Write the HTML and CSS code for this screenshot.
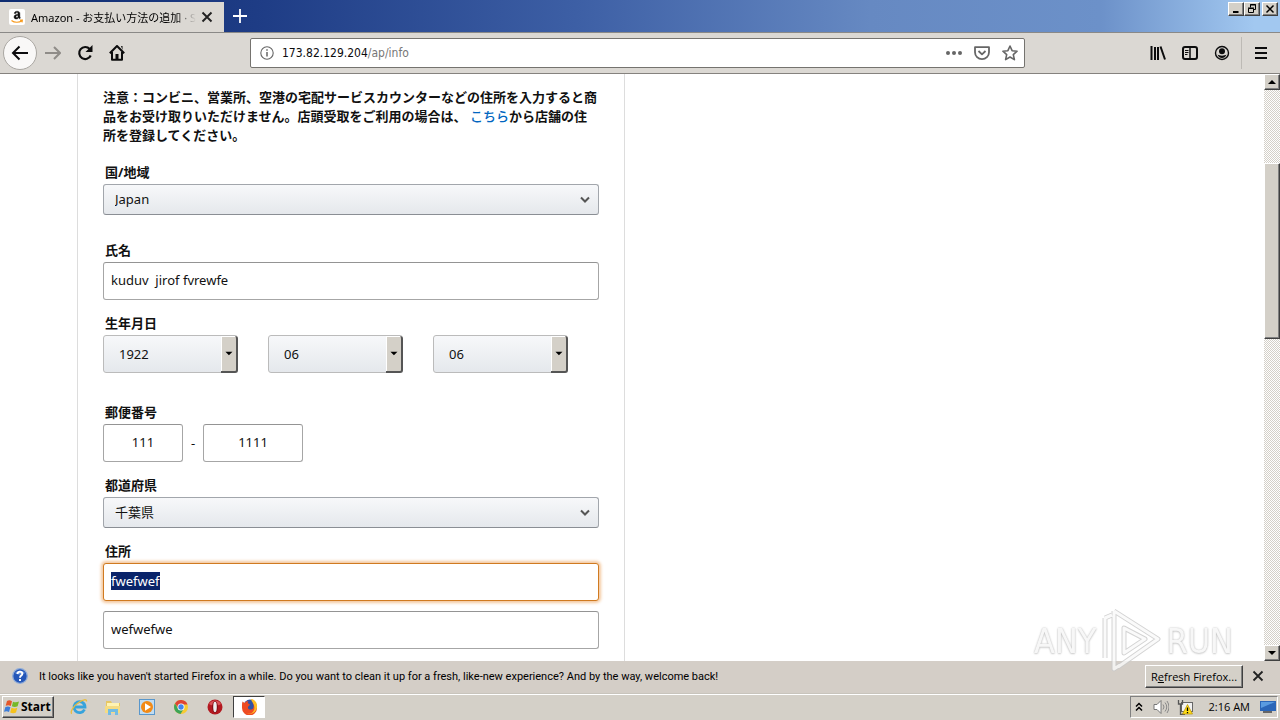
FILE: index.html
```html
<!DOCTYPE html>
<html lang="ja">
<head>
<meta charset="utf-8">
<title>Amazon - お支払い方法の追加</title>
<link rel="stylesheet" href="styles.css">
</head>
<body>
<header class="tabbar">
  <div class="tab">
    <svg class="favicon" viewBox="0 0 16 16" aria-hidden="true"><rect width="16" height="16" rx="2" fill="#fff"/><path d="M10 8.500c-.8 1-1.700 1.500-2.700 1.500C5.900 10 5 9.200 5 7.900 5 6 6.600 5.400 9 5.300V4.700C9 3.900 8.600 3.600 7.900 3.600S6.900 4 6.800 4.600L5.200 4.400C5.400 3 6.500 2.200 8.100 2.200c1.900 0 2.800.9 2.800 2.500V7.500c0 .7.2 1 .6 1.500l-1.100 1zM9 6.400c-1.400 0-2 .5-2 1.300 0 .6.3.9.8.9C8.600 8.600 9 7.900 9 7z" fill="#111" stroke="#111" stroke-width=".4"/><path d="M2.500 11.500c3 2.300 7.500 2.300 10.500.3M11 11.200l2.300-.1-.3 2.200" fill="none" stroke="#f79a1c" stroke-width="1.200"/></svg>
    <span class="tab-title">Amazon - お支払い方法の追加 · S</span>
    <button class="icon-btn tab-close" aria-label="Close tab"><svg width="12" height="12" viewBox="0 0 12 12"><path d="M1.500 1.500l9 9m0-9l-9 9" stroke="#222" stroke-width="1.900"/></svg></button>
  </div>
  <button class="icon-btn new-tab" aria-label="New tab"><svg width="16" height="16" viewBox="0 0 16 16"><path d="M8 1v14M1 8h14" stroke="#fff" stroke-width="1.800"/></svg></button>
  <div class="caption">
    <button class="raised cap" aria-label="Minimize"><svg width="12" height="10" viewBox="0 0 12 10"><path d="M3 8h5.500" stroke="#000" stroke-width="2"/></svg></button>
    <button class="raised cap" aria-label="Restore"><svg width="12" height="10" viewBox="0 0 12 10"><path d="M4.500 3.500V.5h5v5h-2M4 1h6M2.500 4.500h5v4h-5zM2 4h6" fill="none" stroke="#000"/></svg></button>
    <button class="raised cap cap-close" aria-label="Close"><svg width="12" height="10" viewBox="0 0 12 10"><path d="M2.500 1.500l7 7m0-7l-7 7" stroke="#000" stroke-width="1.500"/></svg></button>
  </div>
</header>
<nav class="toolbar">
  <button class="icon-btn back" aria-label="Back"><svg width="18" height="16" viewBox="0 0 18 16"><path d="M8.500 1.500L2 8l6.500 6.500M2 8h15" fill="none" stroke="#0c0c0d" stroke-width="2"/></svg></button>
  <button class="icon-btn nav-btn" aria-label="Forward"><svg width="16" height="16" viewBox="0 0 16 16"><path d="M9 2l6 6-6 6M15 8H0" fill="none" stroke="#8f8c88" stroke-width="2"/></svg></button>
  <button class="icon-btn nav-btn" aria-label="Reload"><svg width="16" height="16" viewBox="0 0 16 16"><path d="M12.700 4A6 6 0 1 0 13.700 10.500" fill="none" stroke="#0c0c0d" stroke-width="2.200"/><path d="M15.500 0v7h-7z" fill="#0c0c0d"/></svg></button>
  <button class="icon-btn nav-btn" aria-label="Home"><svg width="16" height="16" viewBox="0 0 16 16"><path d="M.8 8.200L8 1l7.200 7.200M3 7v7.800h10V7" fill="none" stroke="#0c0c0d" stroke-width="2" stroke-linejoin="round"/><path d="M12 1h1.500v4M6.500 9h3v6h-3z" fill="#0c0c0d"/></svg></button>
  <div class="urlbar">
    <svg width="14" height="14" viewBox="0 0 14 14" aria-hidden="true"><circle cx="7" cy="7" r="6.200" fill="none" stroke="#666" stroke-width="1.100"/><path d="M7 6v4.500M7 3.200v1.600" stroke="#666" stroke-width="1.500"/></svg>
    <span class="url">173.82.129.204<span class="path">/ap/info</span></span>
    <button class="icon-btn" aria-label="Page actions"><svg width="16" height="16" viewBox="0 0 16 16"><g fill="#666"><circle cx="2" cy="8" r="2"/><circle cx="8" cy="8" r="2"/><circle cx="14" cy="8" r="2"/></g></svg></button>
    <button class="icon-btn" aria-label="Save to Pocket"><svg width="16" height="16" viewBox="0 0 16 16"><path d="M1 2.200h14v5a7 7 0 0 1-14 0zM4.500 6l3.500 3.300L11.500 6" fill="none" stroke="#666" stroke-width="1.800" stroke-linejoin="round"/></svg></button>
    <button class="icon-btn" aria-label="Bookmark"><svg width="16" height="16" viewBox="0 0 16 16"><path d="M8 1l2.100 4.700 5 .5-3.800 3.400 1.100 5L8 12l-4.400 2.600 1.100-5L.9 6.200l5-.5z" fill="none" stroke="#666" stroke-width="1.600" stroke-linejoin="round"/></svg></button>
  </div>
  <div class="tools">
    <button class="icon-btn" aria-label="Library"><svg width="16" height="16" viewBox="0 0 16 16"><path d="M1.500 1v14M5 2v13M8 2v13M10.500 1.500l4.500 13" fill="none" stroke="#0c0c0d" stroke-width="2"/></svg></button>
    <button class="icon-btn" aria-label="Sidebars"><svg width="16" height="16" viewBox="0 0 16 16"><rect x="1" y="2" width="14" height="12" rx="2" fill="none" stroke="#0c0c0d" stroke-width="2"/><path d="M8 2v12" stroke="#0c0c0d" stroke-width="1.500"/><path d="M3 5.500h3.500M3 7.500h3.500M3 9.500h2.500" stroke="#0c0c0d"/></svg></button>
    <button class="icon-btn" aria-label="Account"><svg width="16" height="16" viewBox="0 0 16 16"><circle cx="8" cy="8" r="6.500" fill="none" stroke="#0c0c0d" stroke-width="1.400"/><circle cx="8" cy="6.200" r="3" fill="#0c0c0d"/><path d="M3.500 9.500c2 1.500 7 1.500 9 0-.8 2.500-2.500 3.500-4.500 3.500s-3.700-1-4.500-3.500z" fill="#0c0c0d"/></svg></button>
    <span class="tool-sep"></span>
    <button class="icon-btn" aria-label="Menu"><svg width="16" height="16" viewBox="0 0 16 16"><path d="M2 3h12M2 8h12M2 13h12" stroke="#0c0c0d" stroke-width="2"/></svg></button>
  </div>
</nav>
<div class="viewport">
  <main class="page">
    <form class="card">
      <p class="notice">注意：コンビニ、営業所、空港の宅配サービスカウンターなどの住所を入力すると商品をお受け取りいただけません。店頭受取をご利用の場合は、 <a href="#">こちら</a>から店舗の住所を登録してください。</p>
      <div class="field country">
        <label for="country">国/地域</label>
        <div class="select wide"><select id="country"><option>Japan</option></select><svg class="chevron" viewBox="0 0 10 8"><path d="M1 1.500l4 4 4-4" fill="none" stroke="#555" stroke-width="2"/></svg></div>
      </div>
      <div class="field">
        <label for="name">氏名</label>
        <input id="name" type="text" value="kuduv  jirof fvrewfe">
      </div>
      <div class="field birth">
        <label for="year">生年月日</label>
        <div class="dates">
          <div class="select date"><select id="year"><option>1922</option></select><svg class="arrow" viewBox="0 0 17 36"><path d="M5 16l4 4 4-4z"/></svg></div>
          <div class="select date"><select aria-label="月"><option>06</option></select><svg class="arrow" viewBox="0 0 17 36"><path d="M5 16l4 4 4-4z"/></svg></div>
          <div class="select date"><select aria-label="日"><option>06</option></select><svg class="arrow" viewBox="0 0 17 36"><path d="M5 16l4 4 4-4z"/></svg></div>
        </div>
      </div>
      <div class="field">
        <label for="zip">郵便番号</label>
        <div class="zip"><input id="zip" class="zip-a" type="text" value="111"><span>-</span><input class="zip-b" type="text" value="1111" aria-label="郵便番号 下4桁"></div>
      </div>
      <div class="field">
        <label for="pref">都道府県</label>
        <div class="select wide"><select id="pref"><option>千葉県</option></select><svg class="chevron" viewBox="0 0 10 8"><path d="M1 1.500l4 4 4-4" fill="none" stroke="#555" stroke-width="2"/></svg></div>
      </div>
      <div class="field address">
        <label for="addr">住所</label>
        <input id="addr" type="text" value="fwefwef">
        <input type="text" value="wefwefwe" aria-label="住所 2">
      </div>
    </form>
  </main>
  <div class="scrollbar">
    <button class="raised scroll-btn" aria-label="Scroll up"><svg width="8" height="4" viewBox="0 0 8 4"><path d="M0 4l4-4 4 4z"/></svg></button>
    <div class="track"><div class="before"></div><div class="raised thumb"></div><div class="after"></div></div>
    <button class="raised scroll-btn" aria-label="Scroll down"><svg width="8" height="4" viewBox="0 0 8 4"><path d="M0 0l4 4 4-4z"/></svg></button>
  </div>
</div>
<aside class="notification">
  <svg width="16" height="16" viewBox="0 0 16 16" aria-hidden="true"><circle cx="8" cy="8" r="7.300" fill="#2456b8" stroke="#8eabd8" stroke-width="1.300"/><path d="M3 5a6 5 0 0 1 10 0c-3 2-7 2-10 0z" fill="#6c95df"/><path d="M5.500 6C5.500 2.700 10.500 3 10.300 6 10.200 7.700 8 7.600 8 9.700M8 11v2" fill="none" stroke="#fff" stroke-width="1.900"/></svg>
  <p>It looks like you haven't started Firefox in a while. Do you want to clean it up for a fresh, like-new experience? And by the way, welcome back!</p>
  <button class="raised refresh">R<u>e</u>fresh Firefox...</button>
  <button class="icon-btn" aria-label="Dismiss"><svg width="12" height="12" viewBox="0 0 12 12"><path d="M1.500 1.500l9 9m0-9l-9 9" stroke="#222" stroke-width="1.800"/></svg></button>
</aside>
<footer class="taskbar">
  <button class="raised start"><svg width="16" height="16" viewBox="0 0 16 16" aria-hidden="true"><path d="M3 2c2-1 3-.8 5 .2L6.800 7C5 6 3.800 6 1.700 6.700z" fill="#e4572a"/><path d="M9 2.700c2 .8 3.400.9 6-.2l-1.400 4.800c-2 .9-3.800.8-5.700 0z" fill="#76b82a"/><path d="M1.400 8c2-.8 3.400-.7 5 .2L5 13c-1.800-1-3-1-5-.2z" fill="#3c7dd9"/><path d="M7.500 8.700c2 .9 3.800.9 5.800.1L12 13.500c-2 .9-3.800.8-5.800-.1z" fill="#f6c21c"/></svg>Start</button>
  <div class="launch">
    <button class="icon-btn task" aria-label="Internet Explorer"><svg width="18" height="18" viewBox="0 0 18 18"><path d="M14.500 11.500A5.500 5.500 0 1 1 15 9H5" fill="none" stroke="#36a3dc" stroke-width="2.800"/><path d="M2 15.500C-.5 15 3 8 9 4.200c4-2.700 8-3.500 7.500-.7" fill="none" stroke="#e8bc3c" stroke-width="1.300"/></svg></button>
    <button class="icon-btn task" aria-label="Explorer"><svg width="18" height="18" viewBox="0 0 18 18"><path d="M2 3h5l1 2h8v10H2z" fill="#e7c763"/><path d="M3 5h12v5H3z" fill="#fff3b2"/><path d="M1 8h15v7H1z" fill="#f5dc83"/><path d="M4 17v-6h10v6h-3v-3H7v3z" fill="#72bce3"/></svg></button>
    <button class="icon-btn task" aria-label="Media Player"><svg width="18" height="18" viewBox="0 0 18 18"><rect x="1.500" y="1.500" width="15" height="15" fill="#c1dcf1" stroke="#5997cc"/><circle cx="9" cy="9" r="6" fill="#f28a16"/><path d="M7 5.300v7.400L13 9z" fill="#fff"/></svg></button>
    <button class="icon-btn task" aria-label="Chrome"><svg width="16" height="16" viewBox="0 0 16 16"><circle cx="8" cy="8" r="7" fill="#f7cb33"/><path d="M2 4.500a7 7 0 0 1 12.500 1H8L5.500 9.500z" fill="#df4435"/><path d="M2 4.500A7 7 0 0 0 7.500 15L11 9.500H5z" fill="#3da458"/><circle cx="8" cy="8" r="3.500" fill="#fff"/><circle cx="8" cy="8" r="2.700" fill="#4385ee"/></svg></button>
    <button class="icon-btn task" aria-label="Opera"><svg width="16" height="16" viewBox="0 0 16 16"><circle cx="8" cy="8" r="7.500" fill="#b31920"/><path d="M2 5a7 7 0 0 1 12 0c-3 2-9 2-12 0z" fill="#db5358"/><ellipse cx="8" cy="8" rx="2.900" ry="6" fill="#7d0d15"/><ellipse cx="8" cy="8" rx="1.800" ry="5.200" fill="#eee"/></svg></button>
    <button class="icon-btn task active" aria-label="Firefox"><svg width="17" height="17" viewBox="0 0 17 17"><circle cx="9" cy="8" r="6.500" fill="#3153a6"/><path d="M1.500 3.500l2 1.500C5 3 6.500 3 7.500 3.500 6 4.500 7 6 9 6.500c0 1-2.500 1.500-2 3.500s4 2 5 .5 1-4-.5-6c3 .5 4.500 3 4.500 5.500a7.500 7.500 0 0 1-15 0C1 7.500.8 5.500 1.500 3.500z" fill="#ee4b22"/><path d="M10 1c4 .5 6.500 4 6 8.500-1 5-5.500 7.300-10 6.200 5 .3 8-2.700 7.300-7C13 5 10.500 4 10 1z" fill="#ffbd24"/></svg></button>
  </div>
  <div class="tray">
    <svg width="8" height="10" viewBox="0 0 8 10"><path d="M1 4.500l3-3 3 3M1 8.500l3-3 3 3" fill="none" stroke="#000" stroke-width="1.500"/></svg>
    <svg class="speaker" width="16" height="16" viewBox="0 0 16 16"><path d="M1 5.500h3L8 1.500v13l-4-4H1z" fill="#fff" stroke="#777"/><path d="M10 5.500q2 2.500 0 5M12 3.500q3.500 4.500 0 9M14 2q4 6 0 12" fill="none" stroke="#888"/></svg>
    <svg class="network" width="16" height="16" viewBox="0 0 16 16"><rect x="4.500" y="3.500" width="11" height="9" fill="#f2f2f2" stroke="#666"/><path d="M1.500 1v4h4V1M3.500 5v10.500H8" fill="none" stroke="#555" stroke-width="1.300"/><path d="M10.500 5.500l5 9.500h-10z" fill="#ffdc16" stroke="#b79000" stroke-width=".7"/><path d="M10.500 8.500v3.500M10.500 13v1.200" stroke="#000" stroke-width="1.300"/></svg>
    <time>2:16 AM</time>
    <svg width="16" height="14" viewBox="0 0 16 14"><path d="M0 1h16v10H0z" fill="#2b66b8"/><path d="M1 2h14L1 8z" fill="#5a9be0"/><path d="M3 12h9" stroke="#666" stroke-width="2"/></svg>
  </div>
</footer>
<div class="watermark" aria-hidden="true"><span>ANY</span><svg width="62" height="66" viewBox="0 0 62 66"><g fill="none" stroke-linejoin="round"><path d="M14 3L58 31 18 59M14 3v46M24 20v25l21-14zM5 10v40M14 49v12l6-4M5 10l7-3" stroke="#c9c9c9" stroke-width="5"/><path d="M14 3L58 31 18 59M14 3v46M24 20v25l21-14zM5 10v40M14 49v12l6-4M5 10l7-3" stroke="#fafafa" stroke-width="3"/></g></svg><span>RUN</span></div>
<script src="page.js"></script>
</body>
</html>
```
FILE: page.js
```js
const address = document.getElementById("addr");
address.focus({ preventScroll: true });
address.select();
```
FILE: styles.css
```css
* { box-sizing: border-box; }
body {
  margin: 0;
  height: 100vh;
  display: flex;
  flex-direction: column;
  overflow: hidden;
  background: #fff;
  color: #111;
  font: 13px/19px "Noto Sans", "Noto Sans CJK JP", sans-serif;
}
button { font: inherit; color: #000; margin: 0; }
p { margin: 0; }
svg { display: block; flex: none; }
.icon-btn { display: flex; align-items: center; justify-content: center; padding: 0; border: 0; background: none; }
.raised {
  background: #d4d0c8;
  border: 1px solid;
  border-color: #fff #404040 #404040 #fff;
  box-shadow: inset -1px -1px #808080;
}

.tabbar {
  display: flex;
  flex: none;
  height: 32px;
  padding-top: 2px;
  background: linear-gradient(90deg, #0e2c70 0%, #1e3c85 20%, #3d5fa5 45%, #6689c2 68%, #6c91c9 86%, #a2c8f0 98%);
}
.tab {
  display: flex;
  align-items: center;
  width: 224px;
  padding: 0 11px 0 9px;
  background: #dbd8d3;
}
.favicon { width: 16px; height: 16px; }
.tab-title {
  flex: 1;
  margin-left: 6px;
  white-space: nowrap;
  font-family: "Noto Sans", "Noto Sans CJK JP", sans-serif;
  font-size: 11px;
  color: #000;
  mask-image: linear-gradient(90deg, #000 88%, transparent);
}
.tab-close { margin-left: 5px; }
.new-tab { width: 32px; height: 28px; }
.caption { display: flex; align-items: flex-start; margin-left: auto; padding-right: 2px; }
.cap { display: flex; align-items: center; justify-content: center; width: 16px; height: 14px; padding: 0; }
.cap-close { margin-left: 2px; }

.toolbar {
  display: flex;
  align-items: center;
  flex: none;
  height: 42px;
  padding: 0 11px 0 3px;
  background: #dbd8d3;
  border-top: 1px solid #8a8987;
  border-bottom: 1px solid #85827e;
}
.back { width: 34px; height: 34px; border: 1px solid #aaa7a2; border-radius: 50%; background: #f9f8f7; }
.nav-btn { width: 32px; height: 32px; }
.urlbar {
  display: flex;
  align-items: center;
  gap: 12px;
  width: 775px;
  height: 30px;
  margin-left: 117px;
  padding: 0 6px 0 9px;
  background: #fff;
  border: 1px solid #75736f;
  border-radius: 2px;
}
.url {
  flex: 1;
  margin-left: -4px;
  color: #0c0c0d;
  font-family: "DejaVu Sans Condensed", "DejaVu Sans", sans-serif;
  font-size: 12px;
}
.path { color: #777; }
.tools { display: flex; align-items: center; gap: 16px; margin-left: auto; }
.tool-sep { width: 1px; height: 32px; margin: 0 -5px; background: #bdbab5; }

.viewport { display: flex; flex: 1; min-height: 0; }
.page { display: flex; flex: 1; overflow: hidden; padding-left: 77px; }
.card {
  width: 548px;
  padding: 14px 25px 0;
  border: solid #ddd;
  border-width: 0 1px;
}
.notice { margin-bottom: 18px; font-weight: 700; }
.notice a { color: #0066c0; font-weight: 500; text-decoration: none; }
.field { margin-bottom: 14px; }
.country { margin-bottom: 26px; }
.birth { margin-bottom: 30px; }
label { display: block; margin: 0 2px 2px; font-weight: 700; }
input, select { font: inherit; color: #111; }
input {
  display: block;
  width: 100%;
  height: 38px;
  padding: 0 7px 2px;
  border: 1px solid #a6a6a6;
  border-top-color: #949494;
  border-radius: 3px;
  outline: 0;
}
input:focus { border-color: #d07a20; box-shadow: 0 0 3px 2px rgba(228, 121, 17, .4); }
input::selection { background: #0a246a; color: #fff; }
.address input + input { margin-top: 10px; }
.select { position: relative; }
select {
  display: block;
  width: 100%;
  height: 31px;
  padding: 0 11px;
  appearance: none;
  border: 1px solid #a2a6ac;
  border-bottom-color: #8a8e94;
  border-radius: 3px;
  background: linear-gradient(#f7f8fa, #e5e8ec);
  outline: 0;
}
.chevron { position: absolute; right: 9px; top: 12px; width: 10px; height: 8px; pointer-events: none; }
.dates { display: flex; gap: 30px; }
.date { width: 135px; }
.date select { height: 38px; padding: 0 15px; border-color: #bbb; }
.arrow {
  position: absolute;
  top: 1px;
  right: 0;
  width: 17px;
  height: 37px;
  border: solid #555;
  border-width: 0 2px 2px 0;
  border-radius: 0 3px 3px 0;
  background: #d4d0c8;
  box-shadow: inset 1px 1px #fff;
  pointer-events: none;
}
.zip { display: flex; align-items: center; }
.zip input { text-align: center; }
.zip span { width: 20px; text-align: center; }
.zip .zip-a { width: 80px; }
.zip .zip-b { width: 100px; }

.scrollbar { display: flex; flex-direction: column; flex: none; width: 16px; }
.scroll-btn { display: flex; align-items: center; justify-content: center; height: 16px; padding: 0; }
.track {
  display: flex;
  flex: 1;
  flex-direction: column;
  background: repeating-conic-gradient(#fff 0 25%, #d4d0c8 0 50%) 0 0 / 2px 2px;
}
.before { flex: 73; }
.thumb { flex: 175; }
.after { flex: 307; }

.notification {
  display: flex;
  align-items: center;
  flex: none;
  height: 33px;
  padding: 0 16px 2px 12px;
  background: #d4cec7;
  border-bottom: 1px solid #c8c4bc;
  color: #000;
  font-family: Roboto, sans-serif;
  font-size: 11px;
}
.notification p { flex: 1; margin-left: 11px; white-space: nowrap; }
.refresh { width: 98px; height: 23px; margin-right: 9px; padding: 0; font-family: "Open Sans", sans-serif; }
.taskbar {
  display: flex;
  align-items: center;
  flex: none;
  height: 26px;
  padding: 0 2px 2px;
  background: #d4d0c8;
  border-top: 1px solid #fff;
  font-family: "Open Sans", sans-serif;
  font-size: 11px;
}
.start { display: flex; align-items: center; gap: 1px; width: 52px; height: 22px; padding: 0 1px; font-size: 12px; font-weight: 700; }
.launch { display: flex; align-items: center; margin-left: 8px; }
.task { width: 34px; height: 22px; }
.active { width: 32px; background: #fff; border: 1px solid; border-color: #404040 #fff #fff #404040; margin-left: 1px; }
.tray {
  display: flex;
  align-items: center;
  height: 22px;
  margin-left: auto;
  padding: 0 1px 0 4px;
  border: 1px solid;
  border-color: #808080 #fff #fff #808080;
  color: #000;
}
.speaker { margin-left: 10px; }
.network { margin-left: 8px; }
.tray time { margin: 0 10px 0 16px; }

.watermark {
  position: absolute;
  right: 47px;
  bottom: 46px;
  display: flex;
  align-items: center;
  gap: 4px;
  color: #f6f6f6;
  font: 34px/60px "DejaVu Sans Condensed", "DejaVu Sans", sans-serif;
  text-shadow: 0 0 2px #aaa, 0 1px 2px #ccc;
  opacity: .8;
  pointer-events: none;
}
```
